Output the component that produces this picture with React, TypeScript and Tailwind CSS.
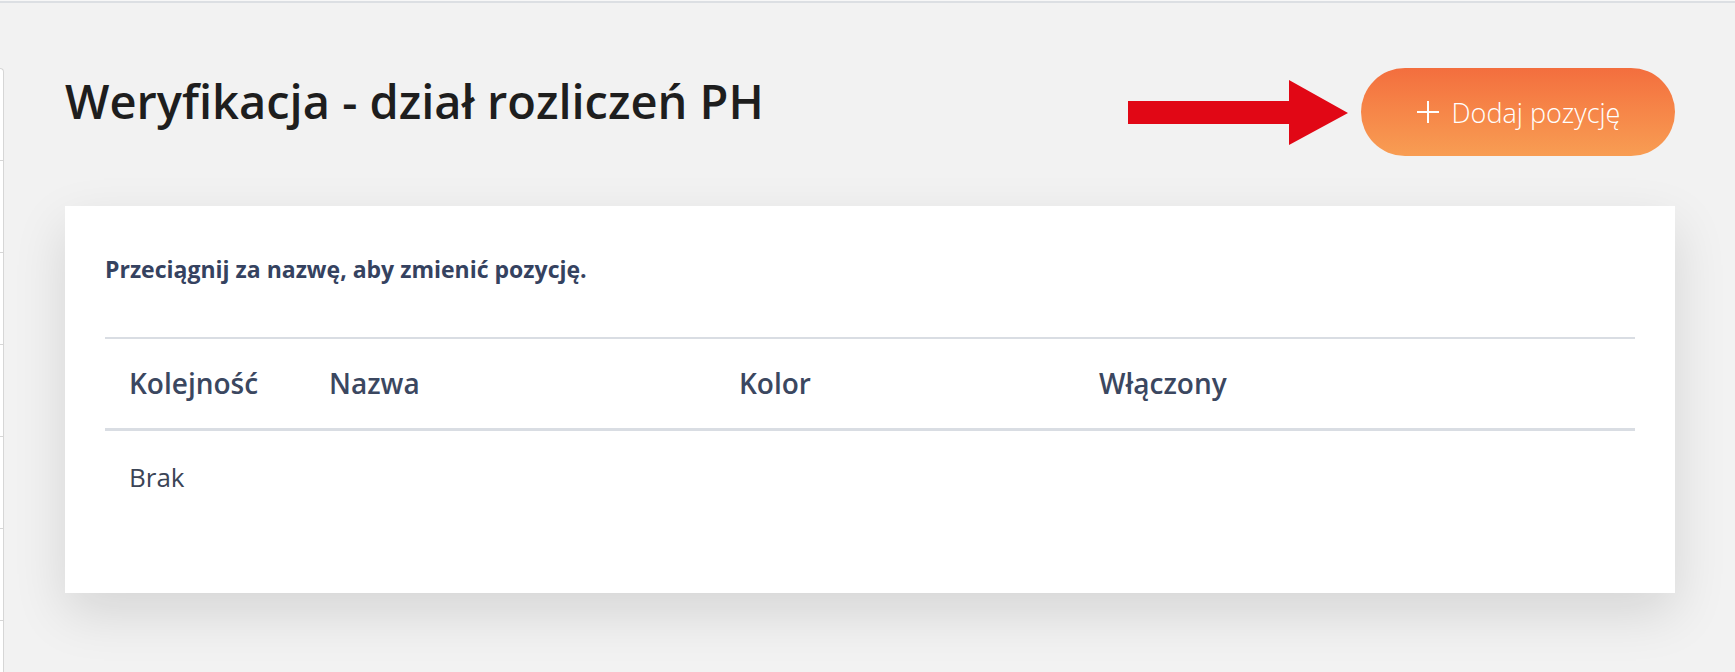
import React from "react";

const cols = ["Kolejność", "Nazwa", "Kolor", "Włączony"];

function Arrow() {
  return (
    <svg width="220" height="65" viewBox="0 0 220 65" aria-hidden="true">
      <polygon points="0,21 161,21 161,0 220,33 161,65 161,44 0,44" fill="#e10715" />
    </svg>
  );
}

function SidebarEdge() {
  // Only the right edge of the collapsed sidebar is visible.
  return (
    <div className="mt-[65px] flex w-[4px] flex-col rounded-tr-[6px] border-r border-t border-[#d6d6d6] bg-white">
      <div className="h-[92px] border-b border-[#d6d6d6]" />
      <div className="h-[92px] border-b border-[#d6d6d6]" />
      <div className="h-[92px] border-b border-[#d6d6d6]" />
      <div className="h-[92px] border-b border-[#d6d6d6]" />
      <div className="h-[92px] border-b border-[#d6d6d6]" />
      <div className="h-[92px] border-b border-[#d6d6d6]" />
      <div className="flex-1" />
    </div>
  );
}

export default function App() {
  return (
    <div className="flex h-[672px] flex-col overflow-hidden bg-[#f2f2f2] font-['Open_Sans',sans-serif]">
      <div className="h-[1px] bg-[#f7f7f7]" />
      <div className="h-[2px] bg-[#dcdfe3]" />
      <div className="flex flex-1">
        <SidebarEdge />
        <main className="flex-1 pl-[61px] pr-[60px]">
          <div className="flex items-start justify-between pt-[65px]">
            <h1 className="mt-[10px] text-[47px] font-semibold leading-none text-[#1e1e1e]">
              Weryfikacja - dział rozliczeń PH
            </h1>
            <div className="flex items-center gap-[13px]">
              <Arrow />
              <button
                type="button"
                className="flex h-[88px] w-[314px] items-center justify-center gap-[12px] rounded-full bg-gradient-to-b from-[#f36e3e] to-[#f89d53] text-white"
              >
                <svg width="24" height="24" viewBox="0 0 24 24" aria-hidden="true">
                  <path d="M12 1v22M1 12h22" stroke="currentColor" strokeWidth="2" />
                </svg>
                <span className="text-[27px] font-light leading-none">Dodaj pozycję</span>
              </button>
            </div>
          </div>

          <section className="mt-[50px] bg-white px-[40px] pb-[103px] pt-[52px] shadow-[0_20px_50px_rgba(0,0,0,0.12)]">
            <p className="text-[23px] font-bold leading-none text-[#354260]">
              Przeciągnij za nazwę, aby zmienić pozycję.
            </p>
            <div className="mt-[56px] border-t-2 border-[#d9dde3]">
              <div className="grid grid-cols-[200px_410px_360px_1fr] border-b-[3px] border-[#d9dde3] pb-[31px] pt-[30px]">
                {cols.map((c) => (
                  <div key={c} className="px-[24px] text-[28px] font-semibold leading-none text-[#3b4760]">
                    {c}
                  </div>
                ))}
              </div>
              <div className="px-[24px] pt-[33px] text-[26px] leading-none text-[#3b4456]">Brak</div>
            </div>
          </section>
        </main>
      </div>
    </div>
  );
}
